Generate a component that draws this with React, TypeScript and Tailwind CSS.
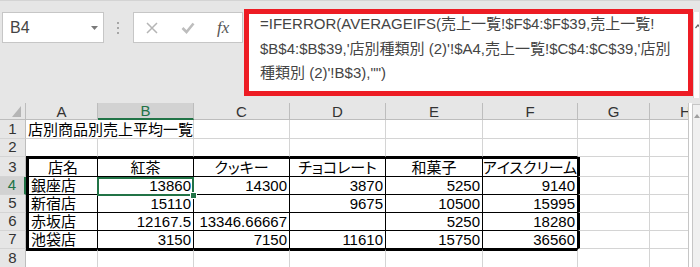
import React from 'react';

const W = ['w-[26px]', 'w-[72px]', 'w-[96px]', 'w-[96px]', 'w-[96px]', 'w-[97px]', 'w-[95px]', 'w-[72px]', 'w-[72px]'];
const LETTERS = ['A', 'B', 'C', 'D', 'E', 'F', 'G', 'H'];
const ROW_H = ['h-[19px]', 'h-[18px]', 'h-[20px]', 'h-[18px]', 'h-[18px]', 'h-[18px]', 'h-[18px]', 'h-[19px]'];

const HEAD = ['店名', '紅茶', 'クッキー', 'チョコレート', '和菓子', 'アイスクリーム'];
const DATA: string[][] = [
  ['銀座店', '13860', '14300', '3870', '5250', '9140'],
  ['新宿店', '15110', '', '9675', '10500', '15995'],
  ['赤坂店', '12167.5', '13346.66667', '', '5250', '18280'],
  ['池袋店', '3150', '7150', '11610', '15750', '36560'],
];

function cellBorder(row: number, col: number) {
  // row: 1..8, col: 0..7 (A..H)
  const inTable = row >= 3 && row <= 7 && col <= 5;
  let cls = 'border-r border-b ';
  if (inTable) {
    cls += 'border-black ';
    if (row === 3) cls += 'border-t-2 ';
    if (col === 0) cls += 'border-l-[3px] ';
  } else {
    cls += 'border-[#d4d4d4] ';
    if (row === 2 && col <= 5) cls += 'border-b-black ';
    if (row === 8 && col <= 5) cls += 'border-t-2 border-t-black ';
    if (col === 6 && row >= 3 && row <= 7) cls += 'border-l-2 border-l-black ';
  }
  return cls;
}

function Cell({ row, col, children }: { row: number; col: number; children?: React.ReactNode }) {
  const text = typeof children === 'string' ? children : '';
  const numeric = /^[0-9.]+$/.test(text);
  const centered = row === 3;
  const selected = row === 4 && col === 1;
  return (
    <div
      className={
        'relative h-full shrink-0 flex items-end whitespace-nowrap leading-[17px] text-[15px] text-black ' +
        W[col + 1] +
        ' ' +
        cellBorder(row, col) +
        (centered ? 'justify-center ' : numeric ? 'justify-end pr-[2px] ' : 'justify-start pl-[2px] ')
      }
    >
      {children}
      {selected && (
        <div className="absolute left-[-1px] top-0 right-[-1px] bottom-[-2px] z-10 border-2 border-[#217346]">
          <div className="absolute right-[-5px] bottom-[-5px] w-[7px] h-[7px] bg-[#217346] border border-white" />
        </div>
      )}
    </div>
  );
}

function RowHead({ n }: { n: number }) {
  const active = n === 4;
  return (
    <div
      className={
        'h-full shrink-0 w-[26px] flex items-end justify-center pb-px text-[15px] leading-[16px] border-b border-[#d4d4d4] ' +
        (active
          ? 'bg-[#d2d2d2] text-[#217346] border-r-2 border-r-[#217346]'
          : 'bg-[#e6e6e6] text-[#333] border-r border-r-[#bdbdbd]')
      }
    >
      {n}
    </div>
  );
}

function Sheet() {
  const rows: React.ReactNode[][] = [];
  rows.push(['店別商品別売上平均一覧']);
  rows.push([]);
  rows.push(HEAD);
  DATA.forEach((d) => rows.push(d));
  rows.push([]);

  return (
    <div className="w-[689px] overflow-hidden border-r border-[#c6c6c6] bg-white">
      {/* column headers */}
      <div className="flex h-[17px] bg-[#e6e6e6]">
        <div className="relative w-[26px] shrink-0 border-r border-b border-[#bdbdbd]">
          <svg className="absolute left-0 top-0" width="26" height="17" viewBox="0 0 26 17">
            <polygon points="21,3 21,14 12,14" fill="#b5b5b5" />
          </svg>
        </div>
        {LETTERS.map((l, i) => (
          <div
            key={l}
            className={
              'shrink-0 flex items-center justify-center text-[15px] leading-[15px] ' +
              W[i + 1] +
              (i === 1
                ? ' bg-[#d2d2d2] text-[#217346] border-r border-r-[#bdbdbd] border-b-2 border-b-[#217346]'
                : ' text-[#333] border-r border-b border-[#bdbdbd]')
            }
          >
            {l}
          </div>
        ))}
      </div>
      {rows.map((r, ri) => {
        const row = ri + 1;
        return (
          <div key={row} className={'flex ' + ROW_H[ri]}>
            <RowHead n={row} />
            {row === 1 ? (
              <>
                <div className="h-full shrink-0 w-[168px] flex items-end pl-[2px] whitespace-nowrap text-[15px] leading-[17px] text-black border-r border-b border-[#d4d4d4]">
                  {r[0]}
                </div>
                {[2, 3, 4, 5, 6, 7].map((c) => (
                  <Cell key={c} row={row} col={c} />
                ))}
              </>
            ) : (
              LETTERS.map((_, c) => (
                <Cell key={c} row={row} col={c}>
                  {r[c] ?? ''}
                </Cell>
              ))
            )}
          </div>
        );
      })}
    </div>
  );
}

function FormulaBar() {
  return (
    <div className="h-[103px] bg-[#e6e6e6]">
      <div className="h-px bg-[#d4d4d4]" />
      <div className="flex items-start">
        {/* name box */}
        <div className="ml-[2px] mt-[11px] w-[102px] h-[31px] bg-white border border-[#c6c6c6] flex items-center">
          <span className="ml-[7px] text-[16px] text-[#444] font-['Liberation_Sans',sans-serif]">B4</span>
          <div className="flex-1" />
          <svg className="mr-[5px]" width="7" height="4" viewBox="0 0 7 4">
            <polygon points="0,0 7,0 3.5,4" fill="#7a7a7a" />
          </svg>
        </div>
        {/* grip dots */}
        <div className="ml-[13px] mt-[21px] flex flex-col gap-[3px]">
          <div className="w-[2px] h-[2px] bg-[#a6a6a6]" />
          <div className="w-[2px] h-[2px] bg-[#a6a6a6]" />
          <div className="w-[2px] h-[2px] bg-[#a6a6a6]" />
        </div>
        {/* cancel / enter / fx */}
        <div className="ml-[14px] mt-[11px] w-[110px] h-[31px] bg-white border border-[#c6c6c6] flex items-center">
          <svg className="ml-[12px]" width="12" height="12" viewBox="0 0 12 12">
            <path d="M1 1 L11 11 M11 1 L1 11" stroke="#b5b5b5" strokeWidth="1.5" fill="none" />
          </svg>
          <svg className="ml-[23px]" width="14" height="12" viewBox="0 0 14 12">
            <path d="M1.5 6 L5.5 10 L12.5 1.5" stroke="#bdbdbd" strokeWidth="2.6" fill="none" />
          </svg>
          <span className="ml-[22px] text-[17px] italic text-[#555] font-['Liberation_Serif',serif] leading-none">
            fx
          </span>
        </div>
        {/* formula input with red annotation frame */}
        <div className="ml-px mt-[8px] w-[449px] h-[87px] bg-white border-[5px] border-[#ed1c24] pl-[11px] text-[15px] text-[#444] font-['Liberation_Sans','Noto_Sans_CJK_JP',sans-serif] whitespace-nowrap">
          <div className="h-[24.5px] mt-[-1px]">=IFERROR(AVERAGEIFS(売上一覧!$F$4:$F$39,売上一覧!</div>
          <div className="h-[24.5px]">$B$4:$B$39,'店別種類別 (2)'!$A4,売上一覧!$C$4:$C$39,'店別</div>
          <div className="h-[24.5px]">種類別 (2)'!B$3),"")</div>
        </div>
        <div className="mt-[11px] w-[6px] h-[86px] bg-white border-l border-[#d4d4d4] overflow-hidden">
          <svg className="ml-[1px] mt-[12px]" width="6" height="5" viewBox="0 0 6 5">
            <path d="M0.5 4 L3 1 L5.5 4" stroke="#666" strokeWidth="1.2" fill="none" />
          </svg>
        </div>
      </div>
    </div>
  );
}

export default function App() {
  return (
    <div className="w-[700px] h-[267px] overflow-hidden bg-[#e6e6e6] font-['Liberation_Sans','Noto_Sans_CJK_JP',sans-serif] [font-feature-settings:'palt']">
      <FormulaBar />
      <div className="flex">
        <Sheet />
        <div className="w-[3px] bg-white" />
        <div className="w-[8px] bg-[#f0f0f0] border-l border-t border-[#c6c6c6] mt-px">
          <svg className="mt-[9px] ml-[1px]" width="6" height="4" viewBox="0 0 6 4">
            <polygon points="0,4 6,4 3,0" fill="#a0a0a0" />
          </svg>
        </div>
      </div>
    </div>
  );
}
